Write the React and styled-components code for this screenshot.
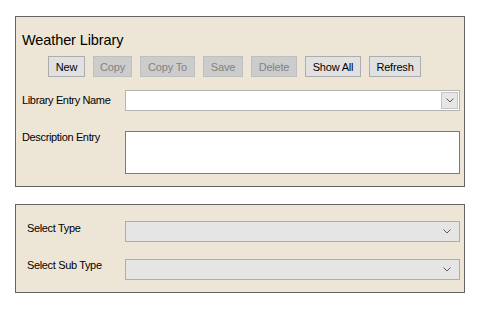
import React from 'react';
import styled, { createGlobalStyle } from 'styled-components';

const GlobalStyle = createGlobalStyle`
  body {
    margin: 0;
    background: #ffffff;
    font-family: "Liberation Sans", Arial, sans-serif;
    font-size: 11px;
    color: #000;
  }
`;

const Page = styled.div`
  display: flex;
  flex-direction: column;
  gap: 17px;
  width: 450px;
  padding: 16px 0 0 15px;
`;

const Panel = styled.section`
  display: flex;
  flex-direction: column;
  background: #ede6d6;
  border: 1px solid #646464;
  padding: ${(p) => p.$pad};
`;

const Title = styled.h1`
  margin: 0;
  font-size: 14.5px;
  font-weight: normal;
  line-height: 17px;
  letter-spacing: -0.1px;
`;

const Toolbar = styled.div`
  display: flex;
  gap: 8px;
  margin: 7px 0 0 26px;
`;

const Button = styled.button`
  box-sizing: border-box;
  width: ${(p) => p.$w}px;
  height: 21px;
  padding: 0;
  font-family: inherit;
  font-size: 11px;
  letter-spacing: -0.2px;
  background: ${(p) => (p.disabled ? '#cccccc' : '#e1e1e1')};
  border: 1px solid ${(p) => (p.disabled ? '#bfbfbf' : '#adadad')};
  color: ${(p) => (p.disabled ? '#838383' : '#000')};
`;

const Row = styled.div`
  display: flex;
  align-items: flex-start;
  margin-top: ${(p) => p.$top}px;
`;

const Label = styled.label`
  flex: 0 0 ${(p) => p.$w}px;
  line-height: 13px;
  padding-top: ${(p) => p.$off}px;
  letter-spacing: -0.35px;
`;

const Combo = styled.div`
  box-sizing: border-box;
  flex: 1;
  height: 21px;
  display: flex;
  justify-content: flex-end;
  align-items: center;
  padding: 1px 1px;
  background: ${(p) => (p.$disabled ? '#e5e5e5' : '#ffffff')};
  border: 1px solid ${(p) => (p.$disabled ? '#adadad' : '#b4b4b4')};
`;

const DropButton = styled.span`
  box-sizing: border-box;
  width: 17px;
  height: 17px;
  display: flex;
  align-items: center;
  justify-content: center;
  background: ${(p) => (p.$plain ? 'transparent' : '#e6e6e6')};
  border: 1px solid ${(p) => (p.$plain ? 'transparent' : '#c4c4c4')};
  margin-right: ${(p) => (p.$plain ? 3 : 0)}px;
`;

const TextBox = styled.div`
  box-sizing: border-box;
  flex: 1;
  height: 43px;
  background: #ffffff;
  border: 1px solid #7a7a7a;
`;

const Chevron = () => (
  <svg width="8" height="5" viewBox="0 0 8 5">
    <polyline points="0.5,0.5 4,4 7.5,0.5" fill="none" stroke="#5a5a5a" strokeWidth="1" />
  </svg>
);

const ComboBox = ({ disabled }) => (
  <Combo $disabled={disabled}>
    <DropButton $plain={disabled}>
      <Chevron />
    </DropButton>
  </Combo>
);

const buttons = [
  { text: 'New', w: 37 },
  { text: 'Copy', w: 39, off: true },
  { text: 'Copy To', w: 55, off: true },
  { text: 'Save', w: 40, off: true },
  { text: 'Delete', w: 46, off: true },
  { text: 'Show All', w: 56 },
  { text: 'Refresh', w: 52 },
];

const App = () => {
  return (
    <>
      <GlobalStyle />
      <Page>
        <Panel $pad="15px 4px 12px 6px">
          <Title>Weather Library</Title>
          <Toolbar>
            {buttons.map((b) => (
              <Button key={b.text} $w={b.w} disabled={b.off}>
                {b.text}
              </Button>
            ))}
          </Toolbar>
          <Row $top={13}>
            <Label $w={103} $off={4}>Library Entry Name</Label>
            <ComboBox />
          </Row>
          <Row $top={20}>
            <Label $w={103} $off={0}>Description Entry</Label>
            <TextBox />
          </Row>
        </Panel>
        <Panel $pad="16px 4px 12px 11px">
          <Row $top={0}>
            <Label $w={98} $off={1}>Select Type</Label>
            <ComboBox disabled />
          </Row>
          <Row $top={17}>
            <Label $w={98} $off={0}>Select Sub Type</Label>
            <ComboBox disabled />
          </Row>
        </Panel>
      </Page>
    </>
  );
};

export default App;
